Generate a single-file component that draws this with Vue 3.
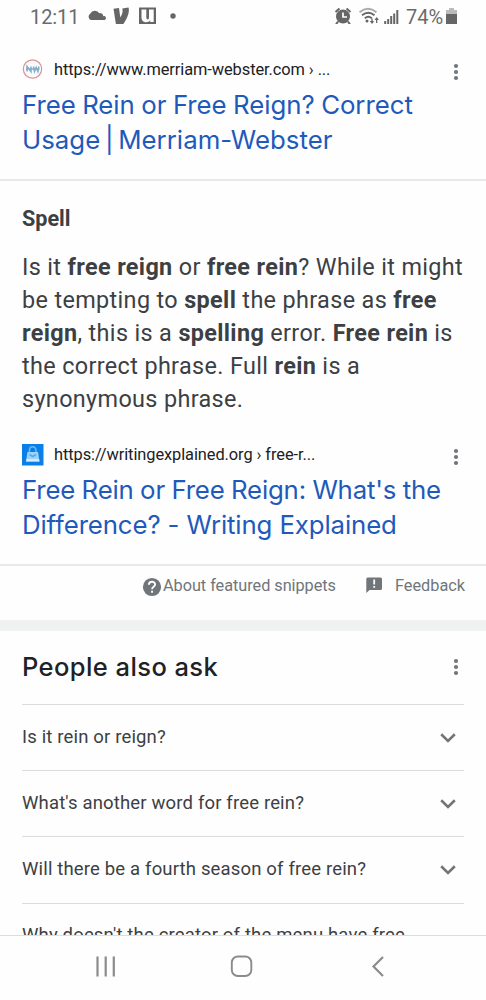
<script setup>
const results = [
  {
    icon: 'mw',
    url: 'https://www.merriam-webster.com › ...',
    lines: ['Free Rein or Free Reign? Correct', 'Usage | Merriam-Webster'],
  },
  {
    icon: 'bag',
    url: 'https://writingexplained.org › free-r...',
    lines: ["Free Rein or Free Reign: What's the", 'Difference? - Writing Explained'],
  },
]
const questions = [
  'Is it rein or reign?',
  "What's another word for free rein?",
  'Will there be a fourth season of free rein?',
  "Why doesn't the creator of the menu have free",
]
</script>

<template>
  <div class="screen">
    <header class="status">
      <span class="time">12:11</span>
      <svg class="left-icons" width="92" height="24" viewBox="0 0 92 24" fill="#666">
        <path d="M5 20a3.500 3.500 0 0 1-.6-6.400A5 5 0 0 1 13.300 13.200a3.200 3.200 0 0 1 4 3A2 2 0 0 1 18.600 20z" />
        <path d="M27.500 8.800l5.500-.8 1.300 9.500C36 14.600 37.200 12 36.300 8.400L42.500 7.500c1.600 5-1.600 11.500-5.500 17.100h-7z" />
        <path fill-rule="evenodd" d="M53 7.500h17v17H53zM55.500 9.500v8.200c0 5.400 7.500 5.800 8.700 2.300V22h3.500V9.500H63v8c0 2.600-2.700 2.600-2.700 0v-8z" />
        <circle cx="87" cy="16" r="2.700" />
      </svg>
      <svg class="right-icons" width="68" height="24" viewBox="0 0 68 24" fill="none" stroke="#666">
        <circle cx="9" cy="16.500" r="7" fill="#666" stroke="none" />
        <path d="M1.500 12l4-3.500M16.500 12l-4-3.500M4 21.500l-2 3M14 21.500l2 3" stroke-width="2" />
        <path d="M9 12.500V17h4" stroke="#fff" stroke-width="1.700" />
        <path d="M25.500 12.200c5.500-4.500 11.500-4.500 17 0" stroke="#aaa" stroke-width="1.800" />
        <path d="M28 15.200c4-3.200 8.500-3.200 12.500 0M30.800 18.200c2.500-2 4.500-2 7 0" stroke-width="1.800" />
        <circle cx="33" cy="21" r="1.500" fill="#666" stroke="none" />
        <path d="M38 18.500v4M42.700 23v-4" stroke-width="1.300" />
        <path d="M35.800 21h4.400L38 24zM40.500 20h4.400l-2.200-3z" fill="#666" stroke="none" />
        <path d="M51.200 24v-3M54.200 24v-5M57.200 24v-8M60.200 24V13.500M63.300 24V10" stroke-width="2" />
      </svg>
      <span class="pct">74%</span>
      <svg class="battery" width="12" height="24" viewBox="0 0 12 24">
        <path d="M3 8h5v2h3v4H0v-4h3z" fill="#bbb" />
        <path d="M0 14h11v10.500H0z" fill="#666" />
      </svg>
    </header>

    <main class="page">
      <template v-for="(r, i) in results" :key="r.icon">
        <article class="result" :class="'result-' + r.icon">
          <div class="source">
            <svg v-if="r.icon === 'mw'" class="favicon" width="22" height="22" viewBox="0 0 22 22" fill="none">
              <circle cx="10.500" cy="11" r="9.200" fill="#f8fafc" stroke="#df9296" stroke-width="1.200" />
              <path d="M5 13.500v-5l4 5v-5M11.500 8.500l1 5 1.700-4 1.700 4 1-5M4 11h13.500" stroke="#86abca" stroke-width="1.500" />
            </svg>
            <svg v-else class="favicon bag" width="22" height="22" viewBox="0 0 22 22">
              <path d="M0 0h21.500v21.500H0z" fill="#0b7fe8" />
              <path d="M7.500 8V6a3.200 3.200 0 0 1 6.400 0V8" fill="none" stroke="#68b8f5" stroke-width="1.600" />
              <path d="M5.500 8h10.500l1.500 9.500H4z" fill="#9dd2fa" />
              <path d="M7.500 10.500l3.200 2 3.300-2" fill="none" stroke="#53aaf2" stroke-width="1.600" />
              <path d="M4.500 15h12.500l.5 2.500H4z" fill="#d3ecfd" />
            </svg>
            <span class="url">{{ r.url }}</span>
            <svg class="dots" width="6" height="18" viewBox="0 0 6 18" fill="#70757a">
              <circle cx="3" cy="3" r="2.100" /><circle cx="3" cy="9" r="2.100" /><circle cx="3" cy="15" r="2.100" />
            </svg>
          </div>
          <h3 class="title">
            <span v-for="(l, n) in r.lines" :key="l" :class="'t' + i + n">{{ l }}</span>
          </h3>
        </article>

        <section v-if="i === 0" class="snippet">
          <h4>Spell</h4>
          <p>
            Is it <b>free reign</b> or <b>free rein</b>? While it might<br />
            be tempting to <b>spell</b> the phrase as <b>free</b><br />
            <b>reign</b>, this is a <b>spelling</b> error. <b>Free rein</b> is<br />
            the correct phrase. Full <b>rein</b> is a<br />
            synonymous phrase.
          </p>
        </section>
      </template>

      <div class="about">
        <svg width="20" height="20" viewBox="0 0 20 20">
          <circle cx="10" cy="10" r="9.100" fill="#70757a" />
          <path d="M6.900 7.700c0-4 6.300-3.900 6.200-.2 0 2.300-3 2.400-3 4.700" fill="none" stroke="#fff" stroke-width="1.900" />
          <path d="M9.100 13.800H11v1.900H9.100z" fill="#fff" />
        </svg>
        <span class="about-text">About featured snippets</span>
        <svg class="flag" width="17" height="17" viewBox="0 0 17 17">
          <path d="M1.500.5h13q1.500 0 1.500 1.500v9.500q0 1.500-1.500 1.500H3.500L.3 16V2Q.3.500 1.500.5z" fill="#70757a" />
          <path d="M7.300 2.500h1.800v5H7.300zM7.300 9h1.800v1.800H7.300z" fill="#fff" />
        </svg>
        <span class="feedback">Feedback</span>
      </div>

      <section class="paa">
        <div class="paa-head">
          <h2>People also ask</h2>
          <svg class="dots" width="6" height="18" viewBox="0 0 6 18" fill="#70757a">
            <circle cx="3" cy="3" r="2.100" /><circle cx="3" cy="9" r="2.100" /><circle cx="3" cy="15" r="2.100" />
          </svg>
        </div>
        <div v-for="(q, i) in questions" :key="q" class="question">
          <span>{{ q }}</span>
          <svg v-if="i < 3" width="16" height="10" viewBox="0 0 16 10">
            <path d="M1.200 1.300L8 8l6.800-6.700" fill="none" stroke="#70757a" stroke-width="2.600" />
          </svg>
        </div>
      </section>
    </main>

    <nav class="nav">
      <svg width="486" height="63" viewBox="0 0 486 63" fill="none" stroke="#8b8b8b" stroke-width="2.200">
        <path d="M97.500 20.500v20M105.700 20.500v20M113.800 20.500v20" />
        <rect x="231.800" y="20.500" width="19.500" height="19.500" rx="6" stroke-width="1.900" />
        <path d="M383 21l-9.500 9.500 9.500 9.500" />
      </svg>
    </nav>
  </div>
</template>

<style>
body { background: #fefefe; }
</style>

<style scoped>
.screen {
  width: 486px;
  height: 1000px;
  display: flex;
  flex-direction: column;
  overflow: hidden;
  background: #fefefe;
  font-family: Roboto, "Liberation Sans", sans-serif;
  white-space: nowrap;
}
h2, h3, h4, p { margin: 0; font-weight: 400; }
.status {
  height: 34px;
  flex: none;
  display: flex;
  align-items: flex-start;
  color: #6b6b6b;
  font-size: 20px;
  line-height: 34px;
}
.time { width: 56px; margin-left: 30px; letter-spacing: -0.1px; }
.left-icons { margin-right: 156px; }
.right-icons { margin-right: 4px; }
.pct { width: 40px; }
.page { flex: 1; min-height: 0; overflow: hidden; }
.result {
  box-sizing: border-box;
  padding: 0 22px;
  border-bottom: 2px solid #e8eaea;
}
.result-mw { height: 147px; padding-top: 23px; }
.result-bag { height: 141px; padding-top: 17px; }
.source { display: flex; align-items: center; height: 24px; }
.favicon { margin-right: 10px; }
.bag { margin-top: 2px; }
.url { flex: 1; font-size: 16.4px; letter-spacing: -0.08px; color: #202124; }
.dots { margin: 5px 5px 0 0; }
.title {
  display: flex;
  flex-direction: column;
  align-items: flex-start;
  padding-top: 6px;
  font-family: Inter, sans-serif;
  font-size: 25.8px;
  line-height: 35px;
  color: #1f5abb;
}
.t00 { letter-spacing: -0.04px; word-spacing: -0.7px; }
.t01 { letter-spacing: 0.02px; word-spacing: -2.6px; }
.t10 { letter-spacing: -0.18px; word-spacing: -0.6px; }
.t11 { letter-spacing: -0.12px; }
.snippet { padding: 23px 22px 0; color: #3c4043; height: 244px; box-sizing: border-box; }
.snippet h4 { font-size: 21.6px; line-height: 30px; font-weight: 700; }
.snippet p { margin-top: 17px; font-size: 23.4px; line-height: 33px; letter-spacing: 0.36px; }
.about {
  height: 46px;
  display: flex;
  align-items: flex-start;
  padding: 8px 0 0 142px;
  border-bottom: 11px solid #f0f2f2;
  color: #70757a;
  font-size: 16.3px;
  line-height: 24px;
}
.about svg { margin-top: 3px; }
.about-text { width: 202px; margin-left: 1px; letter-spacing: -0.04px; }
.about .flag { margin: 3px 12px 0 1px; }
.paa { padding: 0 22px; }
.paa-head {
  display: flex;
  align-items: center;
  justify-content: space-between;
  box-sizing: border-box;
  height: 73px;
  padding-bottom: 2px;
}
.paa h2 { font: 500 25.5px/34px Inter, sans-serif; letter-spacing: 0.42px; color: #202124; }
.paa-head .dots { margin-top: 0; }
.question {
  display: flex;
  align-items: center;
  justify-content: space-between;
  box-sizing: border-box;
  height: 66.2px;
  padding: 0 8px 2px 0;
  border-top: 1.5px solid #dadce0;
  color: #3c4043;
  font-size: 18.5px;
  letter-spacing: 0.16px;
}
.question svg { margin-top: 2px; }
.nav { height: 65px; flex: none; border-top: 1px solid #ddd; box-sizing: border-box; }
.nav svg { display: block; }
</style>
